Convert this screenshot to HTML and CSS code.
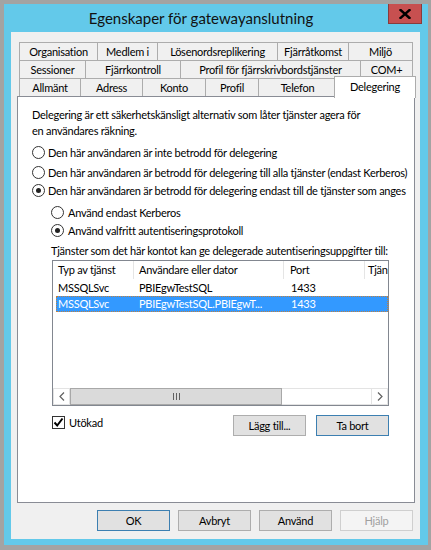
FILE: index.html
```html
<!DOCTYPE html>
<html lang="sv">
<head>
<meta charset="utf-8">
<title>Egenskaper för gatewayanslutning</title>
<link rel="stylesheet" href="styles.css">
</head>
<body>
<div class="screen">
  <div class="window">
    <div class="titlebar">
      <div class="title">Egenskaper för gatewayanslutning</div>
      <div class="close">
        <svg width="12" height="10" viewBox="0 0 12 10"><path d="M1.5 1 L10.5 9 M10.5 1 L1.5 9" stroke="#000" stroke-width="2.4" stroke-linecap="square"/></svg>
      </div>
    </div>
    <div class="client">
      <div class="tabs">
        <div class="tabrow">
          <div class="tab w79">Organisation</div>
          <div class="tab w61">Medlem i</div>
          <div class="tab w121">Lösenordsreplikering</div>
          <div class="tab w72">Fjärråtkomst</div>
          <div class="tab w65">Miljö</div>
        </div>
        <div class="tabrow">
          <div class="tab w67">Sessioner</div>
          <div class="tab w96">Fjärrkontroll</div>
          <div class="tab w181">Profil för fjärrskrivbordstjänster</div>
          <div class="tab w53">COM+</div>
        </div>
        <div class="tabrow">
          <div class="tab w62">Allmänt</div>
          <div class="tab w63">Adress</div>
          <div class="tab w64">Konto</div>
          <div class="tab w54">Profil</div>
          <div class="tab w79">Telefon</div>
          <div class="tab selected">Delegering</div>
        </div>
      </div>
      <div class="page">
        <p class="desc">Delegering är ett säkerhetskänsligt alternativ som låter tjänster agera för<br>en användares räkning.</p>
        <div class="radio r1"><span class="dot"></span><span>Den här användaren är inte betrodd för delegering</span></div>
        <div class="radio r2"><span class="dot"></span><span>Den här användaren är betrodd för delegering till alla tjänster (endast Kerberos)</span></div>
        <div class="radio r3"><span class="dot checked"></span><span>Den här användaren är betrodd för delegering endast till de tjänster som anges</span></div>
        <div class="radio sub s1"><span class="dot"></span><span>Använd endast Kerberos</span></div>
        <div class="radio sub s2"><span class="dot checked"></span><span>Använd valfritt autentiseringsprotokoll</span></div>
        <div class="listlabel">Tjänster som det här kontot kan ge delegerade autentiseringsuppgifter till:</div>
        <div class="list">
          <div class="lhead">
            <div class="hc c1">Typ av tjänst</div>
            <div class="hc c2">Användare eller dator</div>
            <div class="hc c3">Port</div>
            <div class="hc c4">Tjänst</div>
          </div>
          <div class="lrow">
            <div class="rc c1">MSSQLSvc</div>
            <div class="rc c2">PBIEgwTestSQL</div>
            <div class="rc c3">1433</div>
          </div>
          <div class="lrow sel">
            <div class="rc c1">MSSQLSvc</div>
            <div class="rc c2">PBIEgwTestSQL.PBIEgwT...</div>
            <div class="rc c3">1433</div>
          </div>
          <div class="lfill"></div>
          <div class="hscroll">
            <div class="arrow"><svg width="6" height="9" viewBox="0 0 6 9"><path d="M5 0.5 L1 4.5 L5 8.5" fill="none" stroke="#606060" stroke-width="1.2"/></svg></div>
            <div class="thumb"><svg width="7" height="7" viewBox="0 0 7 7"><path d="M0.5 0 V7 M3.5 0 V7 M6.5 0 V7" stroke="#606060" stroke-width="1"/></svg></div>
            <div class="track"></div>
            <div class="arrow"><svg width="6" height="9" viewBox="0 0 6 9"><path d="M1 0.5 L5 4.5 L1 8.5" fill="none" stroke="#606060" stroke-width="1.2"/></svg></div>
          </div>
        </div>
        <div class="actions">
          <div class="check"><span class="box"><svg width="11" height="11" viewBox="0 0 11 11"><path d="M1.5 5.5 L4.2 8.5 L9.5 1.5" fill="none" stroke="#000" stroke-width="2"/></svg></span><span>Utökad</span></div>
          <div class="btn">Lägg till...</div>
          <div class="btn default">Ta bort</div>
        </div>
      </div>
      <div class="buttons">
        <div class="btn default">OK</div>
        <div class="btn">Avbryt</div>
        <div class="btn">Använd</div>
        <div class="btn disabled">Hjälp</div>
      </div>
    </div>
  </div>
</div>
</body>
</html>
```
FILE: styles.css
```css
* { box-sizing: border-box; }
html, body { margin: 0; padding: 0; }
body {
  background: #a3a3a3;
  font-family: Lato, "Liberation Sans", sans-serif;
  font-size: 11px;
  letter-spacing: -0.25px;
  color: #000;
}
.screen { width: 431px; height: 550px; padding: 4px 3px 5px 4px; }
.window {
  width: 424px; height: 541px;
  background: #63c9ea;
  display: flex; flex-direction: column;
}
.titlebar { height: 28px; display: flex; align-items: flex-start; }
.title {
  flex: 1; text-align: center; padding-left: 10px;
  font-size: 15px; letter-spacing: 0; line-height: 28px; color: #111;
}
.close {
  width: 34px; height: 20px; margin-right: 6px;
  background: #c75050; border: 1px solid #8a3b3b; border-top: none;
  display: flex; align-items: center; justify-content: center;
}
.client {
  flex: 1; margin: 0 8px 6px 7px;
  background: #f0f0f0;
  padding-top: 10px;
  display: flex; flex-direction: column;
}
.tabs { margin: 0 7px 0 8px; }
.tabrow { display: flex; height: 19px; margin-bottom: -1px; }
.tab {
  flex: none;
  border: 1px solid #acacac;
  margin-left: -1px;
  background: #f0f0f0;
  text-align: center; line-height: 17px; white-space: nowrap;
}
.tab:first-child { margin-left: 0; }
.w53 { width: 53px; } .w54 { width: 54px; } .w61 { width: 61px; }
.w62 { width: 62px; } .w63 { width: 63px; } .w64 { width: 64px; }
.w65 { width: 65px; } .w67 { width: 67px; } .w72 { width: 72px; }
.w79 { width: 79px; } .w96 { width: 96px; } .w121 { width: 121px; }
.w181 { width: 181px; }
.tab.selected {
  position: relative; z-index: 1;
  width: 82px;
  background: #fff; border-bottom: none;
  height: 22px; margin: -2px -2px -2px -3px;
  line-height: 19px;
}
.page {
  margin: 0 5px 0 6px; height: 407px;
  background: #fff; border: 1px solid #898c95;
  padding: 0 0 0 14px;
  display: flex; flex-direction: column;
}
.desc { margin: 10px 0 0 0; line-height: 16px; white-space: nowrap; }
.radio { display: flex; align-items: center; height: 16px; gap: 3px; white-space: nowrap; }
.r1 { margin-top: 5px; }
.r2 { margin-top: 4px; }
.r3 { margin-top: 2px; }
.sub { margin-left: 19px; gap: 4px; }
.s1 { margin-top: 6px; }
.s2 { margin-top: 2px; }
.dot {
  width: 13px; height: 13px; border-radius: 50%;
  border: 1px solid #333; background: #fff; flex: none;
  display: flex; align-items: center; justify-content: center;
}
.dot.checked::after {
  content: ""; width: 5px; height: 5px; border-radius: 50%; background: #222;
}
.listlabel { margin: 5px 0 0 19px; height: 16px; line-height: 16px; white-space: nowrap; }
.list {
  margin: 1px 0 0 20px; width: 337px; height: 146px;
  border: 1px solid #828790; background: #fff;
  display: flex; flex-direction: column;
}
.lhead { display: flex; height: 18px; flex: none; }
.hc { border-right: 1px solid #e5e5e5; line-height: 18px; white-space: nowrap; overflow: hidden; }
.hc.c1 { width: 81px; padding-left: 5px; }
.hc.c2 { width: 150px; padding-left: 5px; }
.hc.c3 { width: 81px; padding-left: 6px; }
.hc.c4 { flex: 1; padding-left: 3px; border-right: none; }
.lrow { display: flex; height: 16px; margin-left: 3px; line-height: 16px; white-space: nowrap; flex: none; }
.lhead + .lrow { margin-top: 1px; }
.rc.c1 { width: 78px; padding-left: 2px; }
.rc.c2 { width: 150px; padding-left: 5px; }
.rc.c3 { padding-left: 7px; }
.lrow.sel { background: #3399ff; color: #fff; outline: 1px dotted #c08040; outline-offset: -1px; }
.lfill { flex: 1; }
.hscroll { display: flex; height: 17px; flex: none; background: #fcfcfc; }
.arrow {
  width: 17px; border: 1px solid #e3e3e3; background: #fff;
  display: flex; align-items: center; justify-content: center;
}
.thumb {
  width: 212px; background: #dadada; border: 1px solid #a8a8a8;
  display: flex; align-items: center; justify-content: center;
}
.track { flex: 1; background: #fff; border-top: 1px solid #e3e3e3; border-bottom: 1px solid #e3e3e3; }
.actions { display: flex; align-items: flex-start; margin: 9px 0 0 20px; width: 337px; gap: 10px; }
.check { flex: 1; display: flex; align-items: center; gap: 4px; height: 13px; margin-top: 1px; }
.box {
  width: 13px; height: 13px; border: 1px solid #333; background: #fff;
  display: flex; align-items: center; justify-content: center;
}
.btn {
  width: 73px; height: 21px; flex: none;
  background: #e1e1e1; border: 1px solid #adadad;
  text-align: center; line-height: 19px;
}
.btn.default { border-color: #3c7fb1; }
.btn.disabled { background: #f4f4f4; border-color: #cfcfcf; color: #a0a0a0; }
.buttons { display: flex; justify-content: flex-end; gap: 8px; margin-top: 7px; padding-right: 7px; }
```
